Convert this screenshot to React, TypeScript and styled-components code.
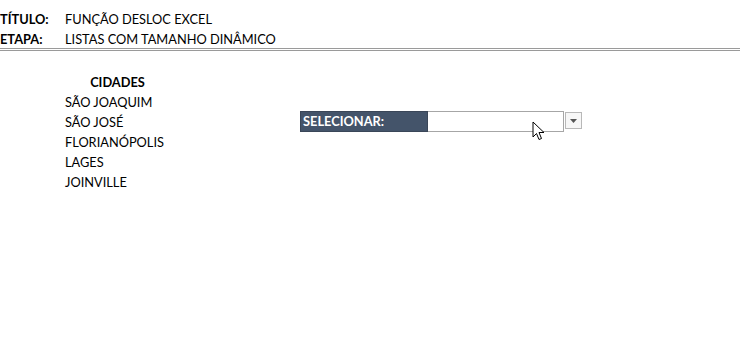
import React from "react";
import styled, { createGlobalStyle } from "styled-components";

const Global = createGlobalStyle`
  html, body { margin: 0; padding: 0; background: #ffffff; }
  body { font-family: "Lato", "Open Sans", sans-serif; color: #000; }
`;

const Page = styled.div`
  width: 740px;
  height: 344px;
  position: relative;
  overflow: hidden;
`;

const Header = styled.div`
  padding-top: 9px;
  display: flex;
  flex-direction: column;
`;

const HeaderRow = styled.div`
  display: grid;
  grid-template-columns: 65px auto;
  height: 20px;
  align-items: center;
  font-size: 12.8px;
`;

const Label = styled.span`
  font-weight: 700;
`;

const Divider = styled.div`
  margin-top: -1px;
  height: 1px;
  border-top: 1px solid #9a9a9a;
  border-bottom: 1px solid #9a9a9a;
`;

const Body = styled.div`
  display: flex;
  padding-top: 21px;
  padding-left: 65px;
`;

const CityList = styled.div`
  width: 105px;
  display: flex;
  flex-direction: column;
`;

const Cell = styled.div<{ $bold?: boolean; $center?: boolean }>`
  height: 20px;
  line-height: 20px;
  font-size: 12.8px;
  font-weight: ${(p) => (p.$bold ? 700 : 400)};
  text-align: ${(p) => (p.$center ? "center" : "left")};
  white-space: nowrap;
`;

const SelectArea = styled.div`
  margin-left: 130px;
  margin-top: 39px;
  display: flex;
  align-items: flex-start;
`;

const SelectLabel = styled.div`
  width: 124px;
  height: 19px;
  background: #44546a;
  color: #ffffff;
  font-weight: 700;
  font-size: 12.8px;
  line-height: 19px;
  padding-left: 2px;
  border: 1px solid #3a4658;
  box-sizing: content-box;
`;

const SelectInput = styled.div`
  width: 135px;
  height: 19px;
  background: #fff;
  border: 1px solid #a6a6a6;
  border-left: none;
`;

const DropButton = styled.div`
  margin-left: 1px;
  margin-top: 1px;
  width: 15px;
  height: 15px;
  border: 1px solid #b8b8b8;
  background: #f7f7f7;
  display: flex;
  align-items: center;
  justify-content: center;
`;

const Cursor = styled.svg`
  position: absolute;
  left: 532px;
  top: 121px;
`;

export default function App() {
  const cities = ["SÃO JOAQUIM", "SÃO JOSÉ", "FLORIANÓPOLIS", "LAGES", "JOINVILLE"];
  return (
    <Page>
      <Global />
      <Header>
        <HeaderRow>
          <Label>TÍTULO:</Label>
          <span>FUNÇÃO DESLOC EXCEL</span>
        </HeaderRow>
        <HeaderRow>
          <Label>ETAPA:</Label>
          <span>LISTAS COM TAMANHO DINÂMICO</span>
        </HeaderRow>
      </Header>
      <Divider />
      <Body>
        <CityList>
          <Cell $bold $center>CIDADES</Cell>
          {cities.map((c) => (
            <Cell key={c}>{c}</Cell>
          ))}
        </CityList>
        <SelectArea>
          <SelectLabel>SELECIONAR:</SelectLabel>
          <SelectInput />
          <DropButton>
            <svg width="7" height="4" viewBox="0 0 7 4">
              <path d="M0 0 H7 L3.5 4 Z" fill="#555" />
            </svg>
          </DropButton>
        </SelectArea>
      </Body>
      <Cursor width="14" height="22" viewBox="0 0 14 22">
        <path
          d="M1 1 L1 16 L4.5 12.5 L7 18.5 L9.5 17.5 L7 11.5 L12 11.5 Z"
          fill="#fff"
          stroke="#000"
          strokeWidth="1"
          strokeLinejoin="round"
        />
      </Cursor>
    </Page>
  );
}
